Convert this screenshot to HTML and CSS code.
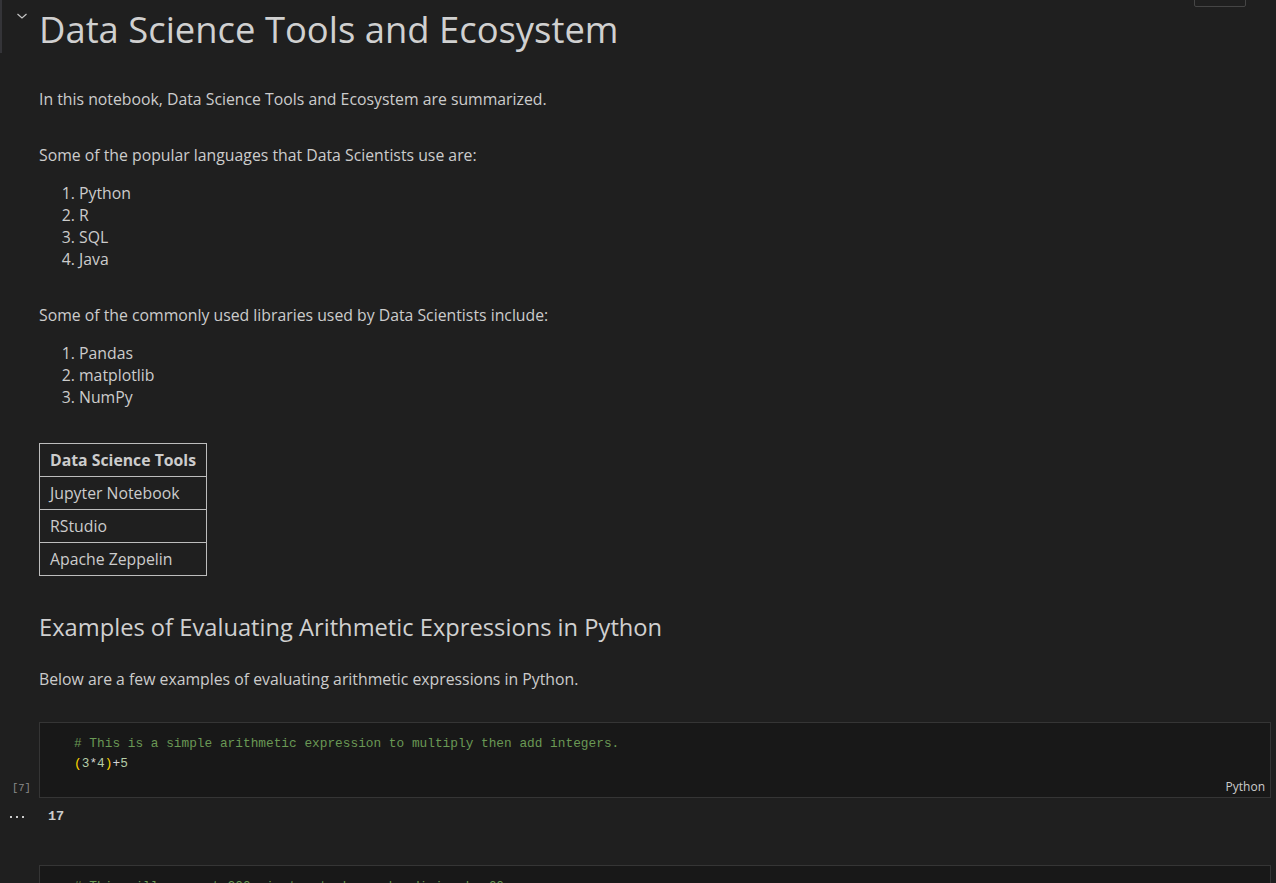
FILE: index.html
```html
<!DOCTYPE html>
<html>
<head>
<meta charset="utf-8">
<link rel="stylesheet" href="styles.css">
</head>
<body>
<div class="notebook">
  <div class="cell-toolbar"></div>

  <div class="row title-row">
    <div class="focus-bar"></div>
    <div class="gutter chevron-gutter">
      <svg class="chevron" width="12" height="8" viewBox="0 0 12 8"><path d="M1.5 2 L6 6 L10.5 2" fill="none" stroke="#c5c5c5" stroke-width="1.2"/></svg>
    </div>
    <div class="md">
      <h1>Data Science Tools and Ecosystem</h1>
    </div>
  </div>

  <div class="row">
    <div class="gutter"></div>
    <div class="md">
      <p class="intro">In this notebook, Data Science Tools and Ecosystem are summarized.</p>
      <p class="para">Some of the popular languages that Data Scientists use are:</p>
      <ol>
        <li>Python</li>
        <li>R</li>
        <li>SQL</li>
        <li>Java</li>
      </ol>
      <p class="para">Some of the commonly used libraries used by Data Scientists include:</p>
      <ol>
        <li>Pandas</li>
        <li>matplotlib</li>
        <li>NumPy</li>
      </ol>
      <table class="tools">
        <thead><tr><th>Data Science Tools</th></tr></thead>
        <tbody>
          <tr><td>Jupyter Notebook</td></tr>
          <tr><td>RStudio</td></tr>
          <tr><td>Apache Zeppelin</td></tr>
        </tbody>
      </table>
      <h2>Examples of Evaluating Arithmetic Expressions in Python</h2>
      <p class="below">Below are a few examples of evaluating arithmetic expressions in Python.</p>
    </div>
  </div>

  <div class="row code-row">
    <div class="gutter exec"><span class="count">[7]</span></div>
    <div class="code-cell">
      <pre class="code"><span class="cm"># This is a simple arithmetic expression to multiply then add integers.</span>
<span class="br">(</span><span class="num">3</span><span class="op">*</span><span class="num">4</span><span class="br">)</span><span class="op">+</span><span class="num">5</span></pre>
      <div class="lang">Python</div>
    </div>
  </div>

  <div class="row output-row">
    <div class="gutter more">
      <svg width="16" height="4" viewBox="0 0 16 4"><rect x="0" y="1" width="2" height="2" fill="#cccccc"/><rect x="6" y="1" width="2" height="2" fill="#cccccc"/><rect x="12" y="1" width="2" height="2" fill="#cccccc"/></svg>
    </div>
    <div class="output">17</div>
  </div>

  <div class="row code-row next">
    <div class="gutter"></div>
    <div class="code-cell">
      <pre class="code"><span class="cm"># This will convert 200 minutes to hours by diving by 60</span></pre>
    </div>
  </div>
</div>
</body>
</html>
```

FILE: styles.css
```css
html, body {
  margin: 0;
  padding: 0;
  background: #1f1f1f;
  height: 883px;
  overflow: hidden;
}

body {
  color: #cccccc;
  font-family: "Open Sans", "Noto Sans", sans-serif;
  font-size: 15.8px;
  line-height: 22px;
}

.notebook {
  position: relative;
  padding-right: 5px;
}

.cell-toolbar {
  position: absolute;
  top: -20px;
  left: 1194px;
  width: 50px;
  height: 25px;
  border: 1px solid #454545;
  border-radius: 2px;
  background: #1f1f1f;
}

.row {
  display: grid;
  grid-template-columns: 39px 1fr;
}

.title-row {
  grid-template-columns: 2px 37px 1fr;
  height: 53px;
}

.focus-bar {
  background: #343438;
  height: 53px;
}

.chevron {
  display: block;
  margin: 12px 0 0 14px;
}

.md h1 {
  margin: 7px 0 0;
  font-size: 36.4px;
  font-weight: 400;
  line-height: 44px;
  color: #d0d0d0;
}

.md p {
  margin: 0;
}

.md .intro {
  margin-top: 35px;
}

.md .para {
  margin-top: 34px;
}

.md ol {
  margin: 16px 0 0;
  padding-left: 40px;
}

.md li {
  line-height: 22px;
}

.tools {
  margin-top: 35px;
  border-collapse: collapse;
  border: 1px solid #bdbdbd;
}

.tools th,
.tools td {
  border: 1px solid #bdbdbd;
  padding: 5px 10px;
  line-height: 22px;
  text-align: left;
  white-space: nowrap;
}

.tools th {
  font-weight: 700;
}

.md h2 {
  margin: 36px 0 0;
  font-size: 23.7px;
  font-weight: 400;
  line-height: 30px;
  color: #d0d0d0;
}

.md .below {
  margin-top: 26px;
}

.code-row {
  margin-top: 32px;
}

.exec {
  display: flex;
  align-items: flex-end;
  justify-content: flex-start;
}

.count {
  font-family: "Liberation Mono", monospace;
  font-size: 10.5px;
  line-height: 14px;
  color: #8b8b8b;
  padding: 0 0 3px 12px;
}

.code-cell {
  background: #181818;
  border: 1px solid #353535;
  padding: 11px 0 0 34px;
}

.code {
  margin: 0;
  font-family: "Liberation Mono", "DejaVu Sans Mono", monospace;
  font-size: 12.8px;
  line-height: 20px;
  color: #d4d4d4;
}

.cm { color: #6a9955; }
.br { color: #ffd700; }
.num { color: #b5cea8; }
.op { color: #d4d4d4; }

.lang {
  height: 23px;
  box-sizing: border-box;
  padding: 5px 5px 0 0;
  text-align: right;
  font-size: 12px;
  line-height: 16px;
  color: #cccccc;
}

.output-row {
  margin-top: 9px;
  height: 20px;
}

.more {
  display: flex;
  align-items: center;
  padding-left: 10px;
}

.output {
  padding-left: 9px;
  font-family: "Liberation Mono", monospace;
  font-size: 13.5px;
  font-weight: 700;
  line-height: 20px;
  color: #cccccc;
}

.next {
  margin-top: 38px;
}
```
